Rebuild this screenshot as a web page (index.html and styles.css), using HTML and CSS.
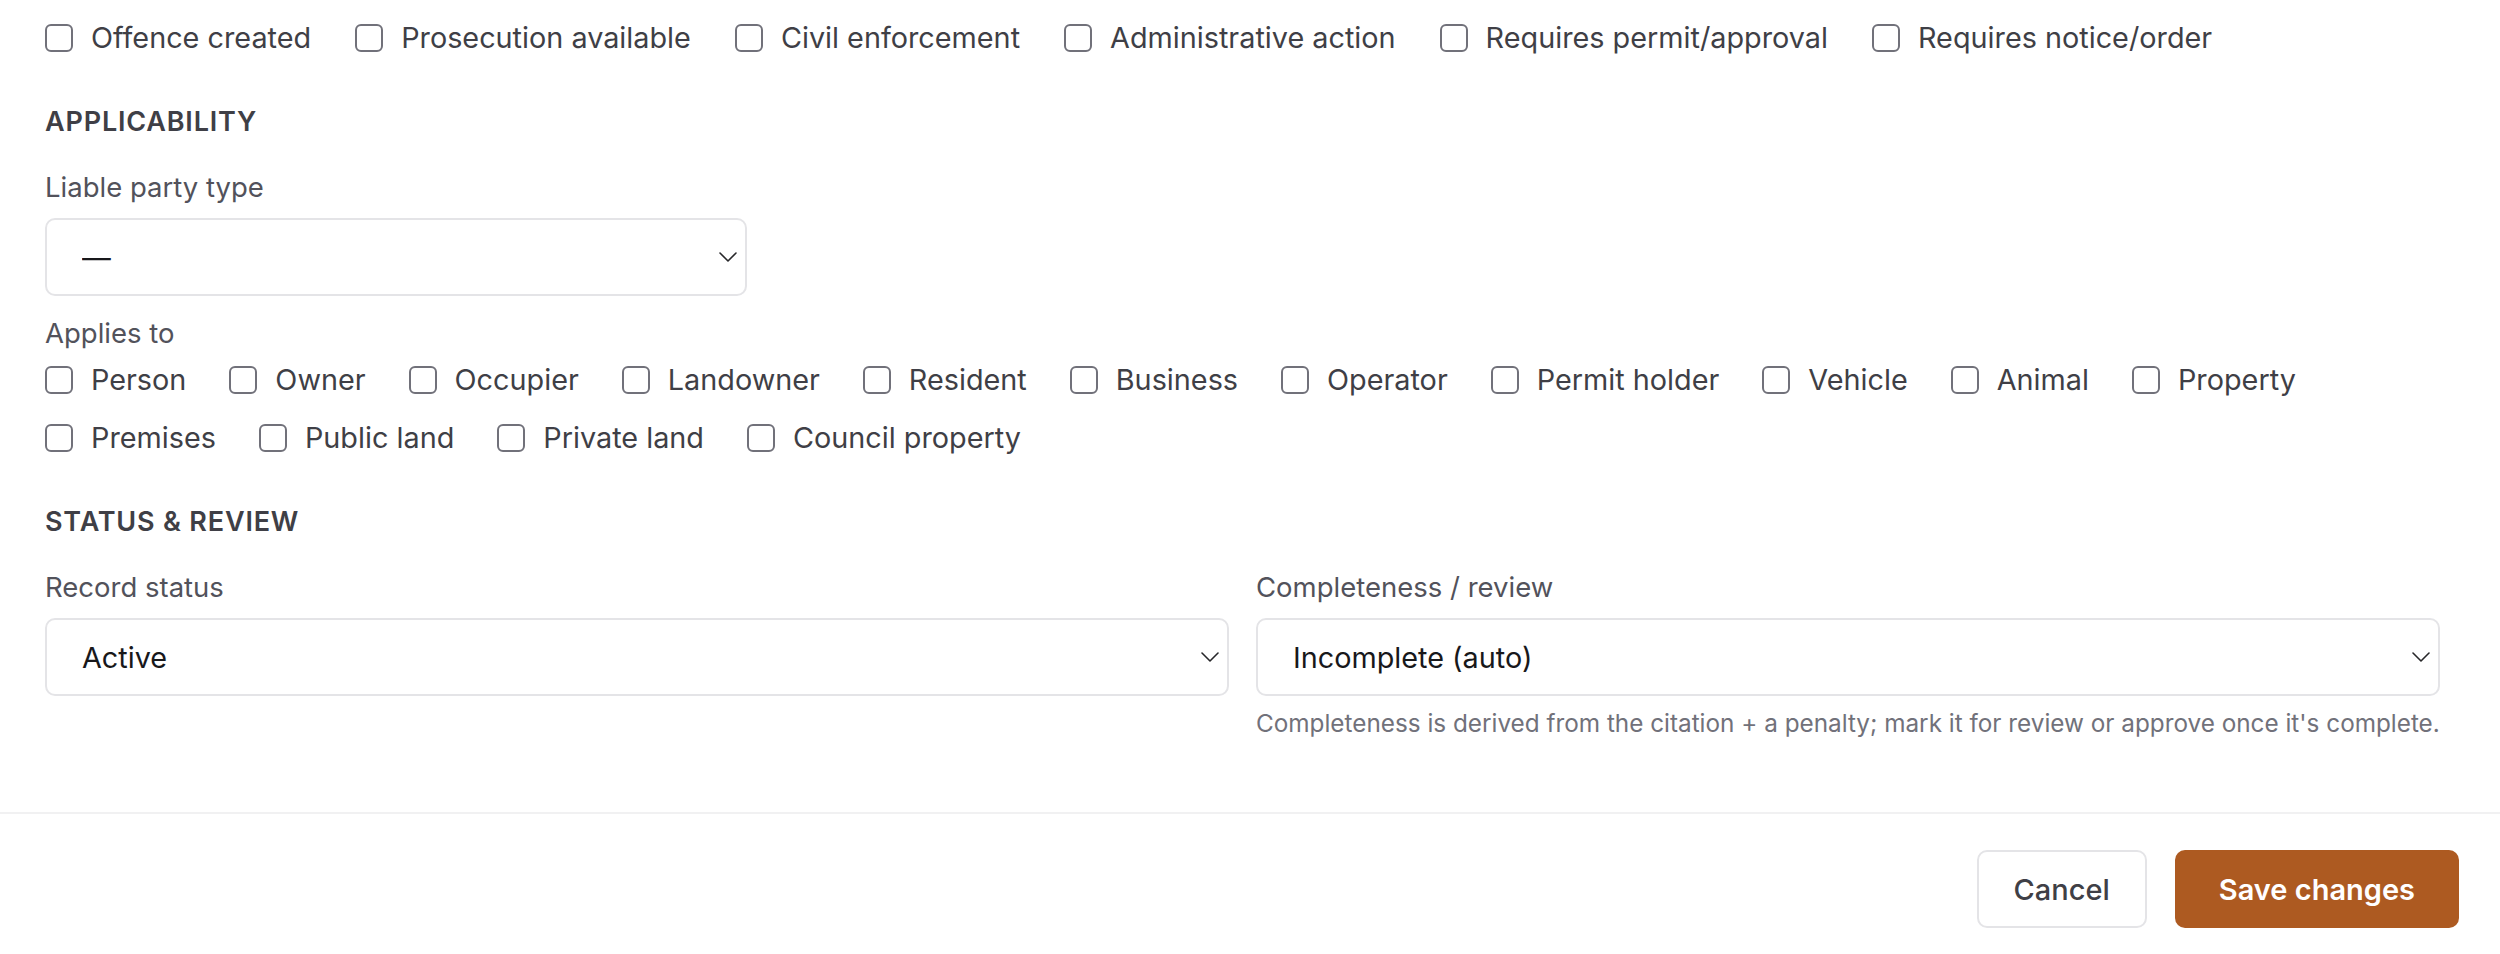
FILE: index.html
```html
<!DOCTYPE html>
<html lang="en">
<head>
    <meta charset="UTF-8">
    <meta name="viewport" content="width=device-width, initial-scale=1.0">
    <title>Edit record</title>
    <link rel="stylesheet" href="styles.css">
</head>
<body>
    <form class="edit-form">
        <div class="form-body">
            <div class="check-row">
                <label class="check"><input type="checkbox"><span>Offence created</span></label>
                <label class="check"><input type="checkbox"><span>Prosecution available</span></label>
                <label class="check"><input type="checkbox"><span>Civil enforcement</span></label>
                <label class="check"><input type="checkbox"><span>Administrative action</span></label>
                <label class="check"><input type="checkbox"><span>Requires permit/approval</span></label>
                <label class="check"><input type="checkbox"><span>Requires notice/order</span></label>
            </div>

            <section class="form-section">
                <h2 class="section-title">Applicability</h2>

                <div class="field field-narrow">
                    <label class="field-label" for="liable">Liable party type</label>
                    <div class="select-wrap">
                        <select id="liable">
                            <option>—</option>
                        </select>
                        <svg class="chevron" width="18" height="10" viewBox="0 0 18 10"><polyline points="1,1 9,9 17,1" fill="none" stroke="#27272a" stroke-width="1.6" stroke-linecap="round" stroke-linejoin="round"/></svg>
                    </div>
                </div>

                <div class="field">
                    <span class="field-label label-tight">Applies to</span>
                    <div class="check-row check-wrap">
                        <label class="check"><input type="checkbox"><span>Person</span></label>
                        <label class="check"><input type="checkbox"><span>Owner</span></label>
                        <label class="check"><input type="checkbox"><span>Occupier</span></label>
                        <label class="check"><input type="checkbox"><span>Landowner</span></label>
                        <label class="check"><input type="checkbox"><span>Resident</span></label>
                        <label class="check"><input type="checkbox"><span>Business</span></label>
                        <label class="check"><input type="checkbox"><span>Operator</span></label>
                        <label class="check"><input type="checkbox"><span>Permit holder</span></label>
                        <label class="check"><input type="checkbox"><span>Vehicle</span></label>
                        <label class="check"><input type="checkbox"><span>Animal</span></label>
                        <label class="check"><input type="checkbox"><span>Property</span></label>
                        <label class="check"><input type="checkbox"><span>Premises</span></label>
                        <label class="check"><input type="checkbox"><span>Public land</span></label>
                        <label class="check"><input type="checkbox"><span>Private land</span></label>
                        <label class="check"><input type="checkbox"><span>Council property</span></label>
                    </div>
                </div>
            </section>

            <section class="form-section">
                <h2 class="section-title">Status &amp; review</h2>
                <div class="two-col">
                    <div class="field">
                        <label class="field-label" for="status">Record status</label>
                        <div class="select-wrap">
                            <select id="status">
                                <option>Active</option>
                            </select>
                            <svg class="chevron" width="18" height="10" viewBox="0 0 18 10"><polyline points="1,1 9,9 17,1" fill="none" stroke="#27272a" stroke-width="1.6" stroke-linecap="round" stroke-linejoin="round"/></svg>
                        </div>
                    </div>
                    <div class="field">
                        <label class="field-label" for="review">Completeness / review</label>
                        <div class="select-wrap">
                            <select id="review">
                                <option>Incomplete (auto)</option>
                            </select>
                            <svg class="chevron" width="18" height="10" viewBox="0 0 18 10"><polyline points="1,1 9,9 17,1" fill="none" stroke="#27272a" stroke-width="1.6" stroke-linecap="round" stroke-linejoin="round"/></svg>
                        </div>
                        <p class="help">Completeness is derived from the citation + a penalty; mark it for review or approve once it's complete.</p>
                    </div>
                </div>
            </section>
        </div>

        <div class="form-footer">
            <button type="button" class="btn btn-cancel">Cancel</button>
            <button type="submit" class="btn btn-save">Save changes</button>
        </div>
    </form>
</body>
</html>
```

FILE: styles.css
```css
html, body {
    margin: 0;
    padding: 0;
    background-color: #ffffff;
    overflow: hidden;
}

body {
    font-family: 'Inter', 'Liberation Sans', sans-serif;
    font-size: 28.8px;
    color: #3f3f46;
}

.form-body {
    padding: 18px 60px 73px 45px;
}

.check-row {
    display: flex;
    align-items: center;
    column-gap: 44px;
    height: 40px;
}

.check-wrap {
    flex-wrap: wrap;
    column-gap: 43px;
    row-gap: 18px;
    height: auto;
}

.check {
    display: flex;
    align-items: center;
    gap: 18px;
    height: 40px;
    line-height: 40px;
    color: #3f3f46;
    white-space: nowrap;
}

.check input {
    appearance: none;
    -webkit-appearance: none;
    margin: 0;
    width: 28px;
    height: 28px;
    border: 2px solid #71717a;
    border-radius: 6px;
    background: #fff;
    flex-shrink: 0;
}

.form-section {
    margin-top: 44px;
}

.section-title {
    margin: 0 0 25px;
    font-size: 27px;
    font-weight: 600;
    line-height: 40px;
    text-transform: uppercase;
    letter-spacing: 0.03em;
    color: #3f3f46;
}

.field + .field {
    margin-top: 17px;
}

.field-narrow {
    width: 702px;
}

.field-label {
    display: block;
    font-size: 27.5px;
    line-height: 40px;
    color: #52525b;
    margin-bottom: 11px;
}

.label-tight {
    margin-bottom: 7px;
}

.select-wrap {
    position: relative;
}

.select-wrap select {
    appearance: none;
    -webkit-appearance: none;
    width: 100%;
    height: 78px;
    margin: 0;
    padding: 0 60px 0 35px;
    border: 2px solid #e4e4e7;
    border-radius: 10px;
    background: #fff;
    font-family: inherit;
    font-size: 28.8px;
    color: #18181b;
}

.chevron {
    position: absolute;
    right: 10px;
    top: 34px;
    pointer-events: none;
}

.two-col {
    display: grid;
    grid-template-columns: 1fr 1fr;
    column-gap: 27px;
}

.two-col .field + .field {
    margin-top: 0;
}

.help {
    margin: 11px 0 0;
    font-size: 24.3px;
    line-height: 32px;
    color: #71717a;
    white-space: nowrap;
}

.form-footer {
    display: flex;
    justify-content: flex-end;
    gap: 28px;
    border-top: 2px solid #f1f1f2;
    padding: 36px 41px 25px 0;
}

.btn {
    height: 78px;
    border-radius: 10px;
    font-family: inherit;
    font-size: 29px;
    cursor: pointer;
}

.btn-cancel {
    padding: 0 35px;
    background: #fff;
    border: 2px solid #e4e4e7;
    color: #3f3f46;
    font-weight: 500;
}

.btn-save {
    padding: 0 44px;
    background: #ad5a21;
    border: none;
    color: #fff;
    font-weight: 600;
}
```
